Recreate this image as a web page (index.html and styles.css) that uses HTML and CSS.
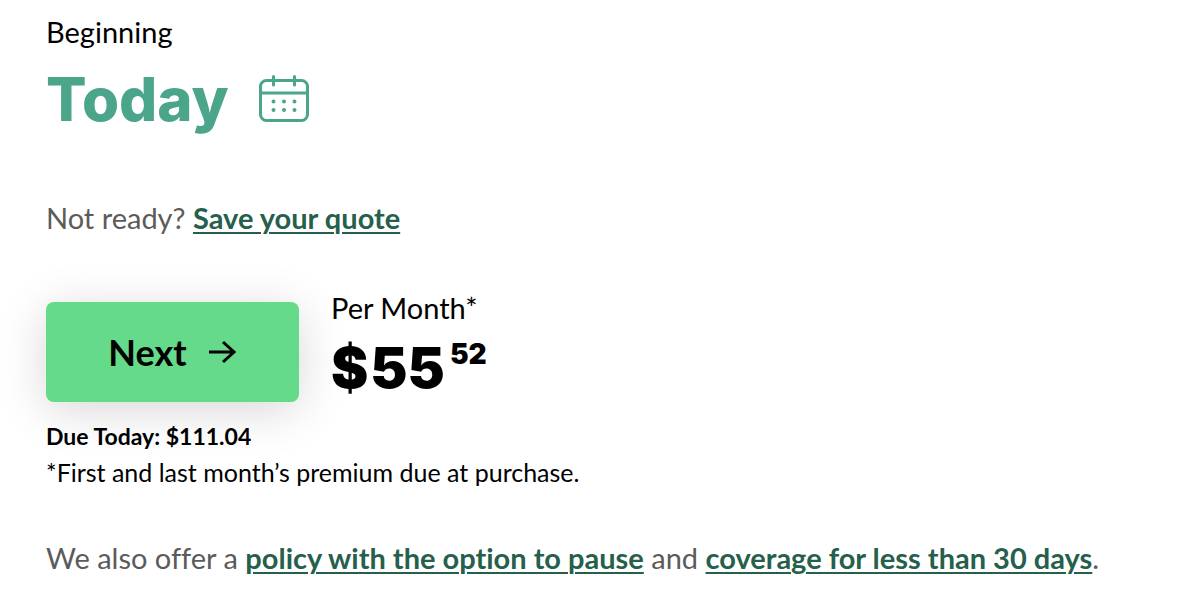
FILE: index.html
```
<!DOCTYPE html>
<html lang="en">
<head>
<meta charset="UTF-8" />
<meta name="viewport" content="width=device-width, initial-scale=1" />
<title>Your quote</title>
<link rel="stylesheet" href="styles.css">
</head>
<body>
<main class="quote">
  <section class="start">
    <p class="label">Beginning</p>
    <button type="button" class="date">
      <span>Today</span>
      <svg class="calendar" viewBox="0 0 50 48" fill="none" stroke="#4aa58b" stroke-width="3" aria-hidden="true">
        <rect x="1.5" y="5.5" width="47" height="40" rx="6" />
        <path d="M2 18H48" />
        <path d="M14.500 1.500V10M35.500 1.500V10" stroke-linecap="round" />
        <path d="M14.500 26.500h.01M25 26.500h.01M35.500 26.500h.01M14.500 35h.01M25 35h.01M35.500 35h.01" stroke-width="4" stroke-linecap="round" />
      </svg>
    </button>
  </section>

  <p class="save">Not ready? <a href="#save">Save your quote</a></p>

  <section class="checkout">
    <button type="button" class="next">
      Next
      <svg class="arrow" viewBox="0 0 28 24" fill="none" stroke="#000" stroke-width="3" aria-hidden="true">
        <path d="M0 12H25M14 2L25 12L14 22" />
      </svg>
    </button>
    <div class="price">
      <p class="label">Per Month*</p>
      <p class="amount"><span class="dollar">$</span><span>55</span><span class="cents">52</span></p>
    </div>
  </section>

  <p class="due">Due Today: $111.04</p>
  <p class="note">*First and last month’s premium due at purchase.</p>

  <p class="offer">We also offer a <a href="#pause">policy with the option to pause</a> and <a href="#short">coverage for less than 30 days</a>.</p>
</main>
</body>
</html>
```
FILE: styles.css
```
body { background: #fff; color: #000; font-family: Lato, sans-serif; font-size: 29px; line-height: 36px; font-variant-ligatures: none; margin: 0; }
p { margin: 0; }
button { border: none; color: inherit; cursor: pointer; font-family: inherit; }
a { color: #265f4b; font-weight: 700; text-decoration-thickness: 2px; text-underline-offset: 3px; }
.quote { padding: 14px 46px; }
.date { display: flex; align-items: center; gap: 30px; background: none; color: #4aa58b; font-family: Inter, sans-serif; font-size: 60px; font-weight: 800; line-height: 80px; padding: 0; margin-top: 9px; }
.calendar { width: 50px; height: 48px; }
.save { color: #5b5b5b; margin-top: 61px; }
.checkout { display: flex; align-items: flex-start; gap: 32px; margin-top: 54px; }
.next { display: flex; align-items: center; justify-content: center; gap: 22px; width: 253px; height: 100px; margin-top: 12px; background: #65da8a; border-radius: 8px; box-shadow: 0 8px 48px rgba(0, 0, 0, 0.16); font-size: 36px; font-weight: 700; }
.arrow { width: 28px; height: 24px; }
.amount { display: flex; align-items: flex-start; font-family: Inter, sans-serif; font-size: 56px; font-weight: 900; line-height: 84px; }
.dollar { margin-right: 2px; }
.cents { font-size: 28px; line-height: 56px; margin-left: 5px; }
.due { font-size: 23px; font-weight: 700; margin-top: 8px; }
.note { font-size: 25px; }
.offer { color: #5b5b5b; margin-top: 50px; }
```
